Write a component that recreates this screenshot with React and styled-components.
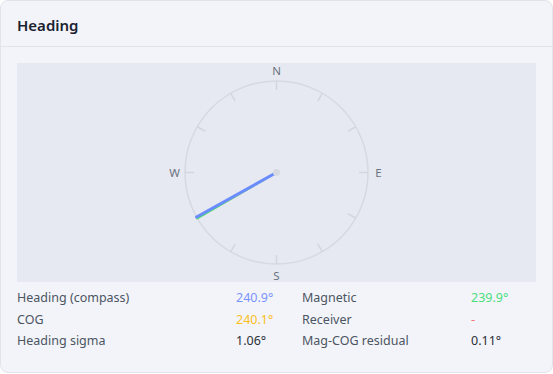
import React from "react";
import styled, { createGlobalStyle } from "styled-components";

const Global = createGlobalStyle`
  html, body { margin: 0; padding: 0; background: #ffffff; }
  body { font-family: "Segoe UI", "Noto Sans", "Open Sans", sans-serif; }
`;

const Card = styled.div`
  box-sizing: border-box;
  width: 553px;
  height: 373px;
  background: #f3f4f9;
  border: 1px solid #e1e4ea;
  border-radius: 8px;
  display: flex;
  flex-direction: column;
  overflow: hidden;
`;

const Header = styled.div`
  height: 45px;
  border-bottom: 1px solid #e1e4ea;
  display: flex;
  align-items: center;
  padding: 0 16px;
`;

const Title = styled.h2`
  margin: 0;
  padding-top: 2px;
  font-size: 15px;
  font-weight: 600;
  color: #1a2230;
  letter-spacing: 0;
`;

const Body = styled.div`
  padding: 16px 16px 0 16px;
  display: flex;
  flex-direction: column;
`;

const Canvas = styled.div`
  height: 219px;
  background: #e6e9f1;
  display: flex;
  align-items: center;
  justify-content: center;
`;

const Stats = styled.div`
  display: grid;
  grid-template-columns: 219px 66px 169px 1fr;
  grid-auto-rows: 21.5px;
  padding-top: 5px;
  font-size: 12.5px;
  align-items: center;
`;

const Label = styled.span`
  color: #4b5563;
`;

const Value = styled.span`
  color: ${(p) => p.$color || "#2a2f38"};
  font-weight: 400;
`;

function Compass() {
  const cx = 259.5;
  const cy = 109.5;
  const r = 91.5;
  const ticks = [];
  for (let a = 0; a < 360; a += 30) {
    const rad = (a * Math.PI) / 180;
    const s = Math.sin(rad);
    const c = Math.cos(rad);
    ticks.push(
      <line
        key={a}
        x1={cx + s * r}
        y1={cy - c * r}
        x2={cx + s * (r - 9)}
        y2={cy - c * (r - 9)}
        stroke="#d3d6de"
        strokeWidth="1.5"
      />
    );
  }
  const needle = (deg, color, w) => {
    const rad = (deg * Math.PI) / 180;
    return (
      <line
        x1={cx}
        y1={cy}
        x2={cx + Math.sin(rad) * r}
        y2={cy - Math.cos(rad) * r}
        stroke={color}
        strokeWidth={w}
        strokeLinecap="round"
      />
    );
  };
  const lbl = { fontSize: 11.5, fill: "#6b7280", fontFamily: "Segoe UI, Noto Sans, sans-serif", textAnchor: "middle", dominantBaseline: "central" };
  return (
    <svg width="519" height="219" viewBox="0 0 519 219">
      <circle cx={cx} cy={cy} r={r} fill="none" stroke="#d6d9e0" strokeWidth="1.5" />
      {ticks}
      <text x={cx} y={cy - 102.5} {...lbl}>N</text>
      <text x={cx} y={cy + 102.5} {...lbl}>S</text>
      <text x={cx - 102} y={cy} {...lbl}>W</text>
      <text x={cx + 102} y={cy} {...lbl}>E</text>
      {needle(240.1, "#fbbf24", 2)}
      {needle(239.9, "#4ade80", 2)}
      {needle(240.9, "#6b8cff", 3)}
      <circle cx={cx} cy={cy} r="3.5" fill="#d6d9e0" />
    </svg>
  );
}

export default function App() {
  return (
    <>
      <Global />
      <Card>
        <Header>
          <Title>Heading</Title>
        </Header>
        <Body>
          <Canvas>
            <Compass />
          </Canvas>
          <Stats>
            <Label>Heading (compass)</Label>
            <Value $color="#7b93ff">240.9°</Value>
            <Label>Magnetic</Label>
            <Value $color="#4ade80">239.9°</Value>
            <Label>COG</Label>
            <Value $color="#fbbf24">240.1°</Value>
            <Label>Receiver</Label>
            <Value $color="#f87171">-</Value>
            <Label>Heading sigma</Label>
            <Value>1.06°</Value>
            <Label>Mag-COG residual</Label>
            <Value>0.11°</Value>
          </Stats>
        </Body>
      </Card>
    </>
  );
}
